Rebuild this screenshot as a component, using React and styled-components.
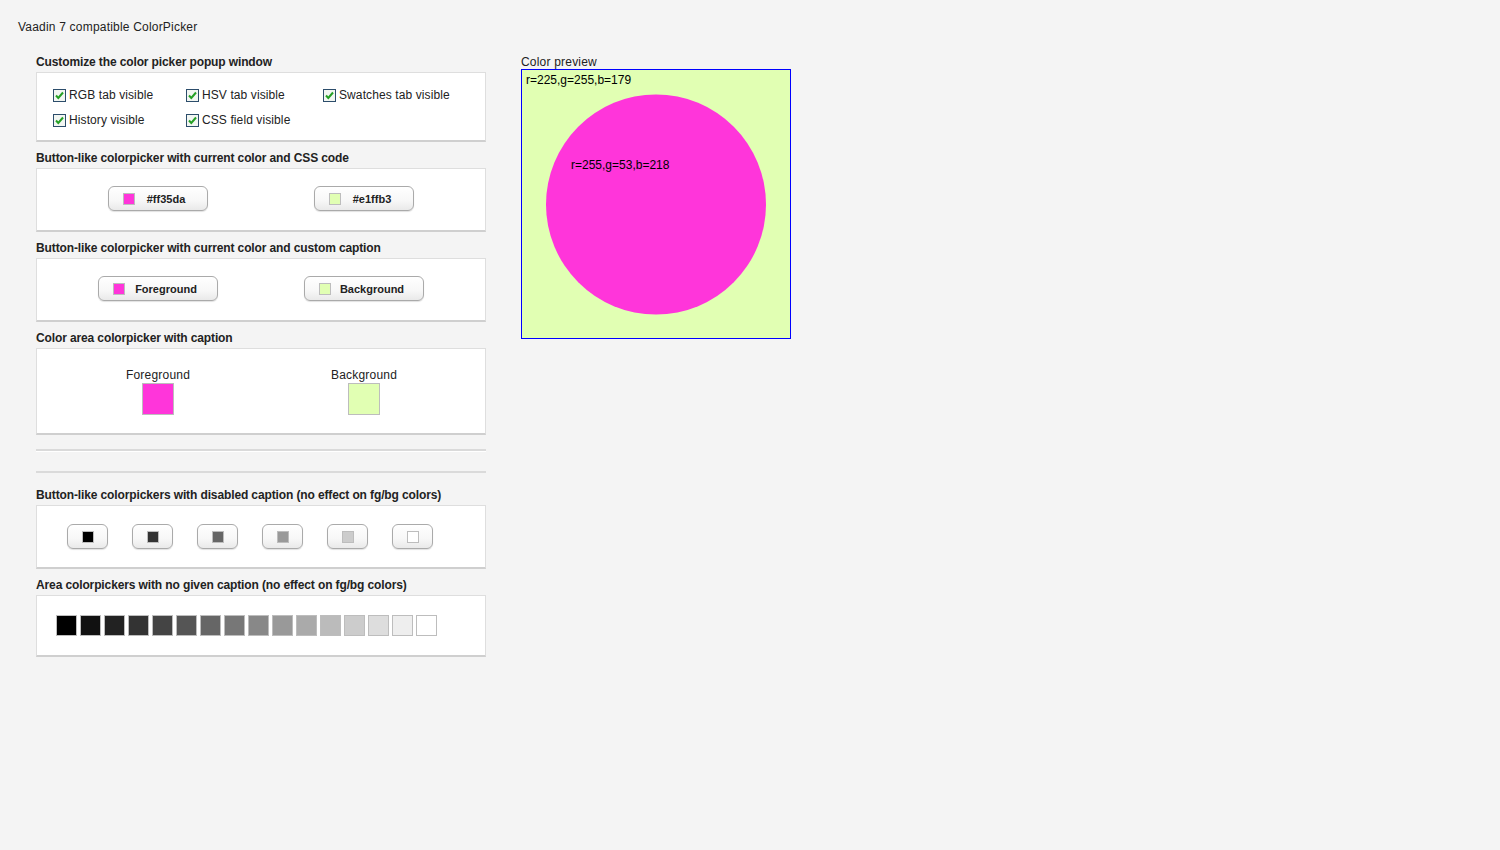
import React from 'react';
import styled, { createGlobalStyle } from 'styled-components';

const GlobalStyle = createGlobalStyle`
  html, body {
    margin: 0;
    padding: 0;
    background: #f4f4f4;
  }
  body {
    font-family: "Liberation Sans", Arial, sans-serif;
    font-size: 12px;
    color: #222;
  }
`;

const Page = styled.div`
  padding: 19px 0 0 18px;
  min-height: 850px;
  box-sizing: border-box;
`;

const Title = styled.div`
  font-size: 12px;
  line-height: 16px;
  letter-spacing: 0.2px;
`;

const Main = styled.div`
  display: flex;
  align-items: flex-start;
  gap: 35px;
  margin-top: 19px;
  padding-left: 18px;
`;

const LeftColumn = styled.div`
  width: 450px;
  display: flex;
  flex-direction: column;
`;

const Section = styled.div`
  display: flex;
  flex-direction: column;
  margin-top: ${p => p.$top || 0}px;
`;

const Caption = styled.div`
  font-weight: bold;
  font-size: 12px;
  line-height: 16px;
  letter-spacing: -0.12px;
  margin-bottom: 2px;
  white-space: nowrap;
`;

const Panel = styled.div`
  background: #fff;
  border: 1px solid #dedede;
  border-bottom: 2px solid #cfcfcf;
  height: ${p => p.$h}px;
  box-sizing: border-box;
`;

const CheckGrid = styled.div`
  display: grid;
  grid-template-columns: 133px 137px auto;
  row-gap: 9px;
  padding: 14px 0 0 16px;
`;

const CheckItem = styled.label`
  display: flex;
  align-items: center;
  gap: 3px;
  height: 16px;
  letter-spacing: 0.1px;
  white-space: nowrap;
`;

const TwoCols = styled.div`
  display: grid;
  grid-template-columns: 206px 206px;
  padding: 0 0 2px 18px;
  box-sizing: border-box;
  height: 100%;
  align-items: center;
  justify-items: center;
`;

const Button = styled.div`
  width: ${p => p.$w}px;
  height: 25px;
  box-sizing: border-box;
  border: 1px solid #aaa;
  border-radius: 6px;
  background: linear-gradient(#ffffff, #f7f7f7 60%, #e9e9e9);
  box-shadow: 0 1px 1px rgba(0, 0, 0, 0.12);
  display: flex;
  align-items: center;
  justify-content: ${p => (p.$icon ? 'center' : 'flex-start')};
  padding: ${p => (p.$icon ? '0' : '0 10px 0 14px')};
  font-weight: bold;
  font-size: 11px;
`;

const ButtonText = styled.span`
  flex: 1;
  text-align: center;
`;

const Swatch = styled.span`
  display: block;
  flex: none;
  width: ${p => p.$size}px;
  height: ${p => p.$size}px;
  box-sizing: border-box;
  border: 1px solid #bdbdbd;
  background: ${p => p.$color};
`;

const AreaPicker = styled.div`
  display: flex;
  flex-direction: column;
  align-items: center;
  gap: 0;
  padding-top: 18px;
  align-self: start;
  letter-spacing: 0.2px;
  line-height: 16px;
`;

const EmptyLine = styled.div`
  height: 0;
  border-top: 2px solid #dadada;
  border-bottom: ${p => (p.$white ? '1px solid #fff' : 'none')};
  margin-top: ${p => p.$top}px;
`;

const ButtonRow = styled.div`
  display: flex;
  align-items: center;
  gap: 24px;
  height: 100%;
  padding-left: 30px;
  box-sizing: border-box;
`;

const SwatchRow = styled.div`
  display: flex;
  gap: 3px;
  padding: 19px 0 0 19px;
`;

const RightColumn = styled.div`
  display: flex;
  flex-direction: column;
`;

const PreviewCaption = styled.div`
  line-height: 16px;
  letter-spacing: 0.2px;
  margin-bottom: -1px;
`;

const PreviewBox = styled.div`
  width: 270px;
  height: 270px;
  box-sizing: border-box;
  border: 1px solid #0000ff;
  background: #e1ffb3;
`;

const CheckBox = () => (
  <svg width="13" height="13" viewBox="0 0 13 13">
    <rect x="0.5" y="0.5" width="12" height="12" fill="#f2f6f2" stroke="#2c4d6b" />
    <path d="M3 6.5 L5.3 9 L10 3.5" fill="none" stroke="#25a025" strokeWidth="2" />
  </svg>
);

const checks = [
  'RGB tab visible',
  'HSV tab visible',
  'Swatches tab visible',
  'History visible',
  'CSS field visible'
];

const disabledColors = ['#000', '#333', '#666', '#999', '#ccc', '#fff'];
const areaColors = ['#000', '#111', '#222', '#333', '#444', '#555', '#666', '#777',
  '#888', '#999', '#aaa', '#bbb', '#ccc', '#ddd', '#eee', '#fff'];

const App = () => {
  return (
    <>
      <GlobalStyle />
      <Page>
        <Title>Vaadin 7 compatible ColorPicker</Title>
        <Main>
          <LeftColumn>
            <Section>
              <Caption>Customize the color picker popup window</Caption>
              <Panel $h={70}>
                <CheckGrid>
                  {checks.map(c => (
                    <CheckItem key={c}><CheckBox />{c}</CheckItem>
                  ))}
                </CheckGrid>
              </Panel>
            </Section>

            <Section $top={8}>
              <Caption>Button-like colorpicker with current color and CSS code</Caption>
              <Panel $h={64}>
                <TwoCols>
                  <Button $w={100}><Swatch $size={12} $color="#ff35da" /><ButtonText>#ff35da</ButtonText></Button>
                  <Button $w={100}><Swatch $size={12} $color="#e1ffb3" /><ButtonText>#e1ffb3</ButtonText></Button>
                </TwoCols>
              </Panel>
            </Section>

            <Section $top={8}>
              <Caption>Button-like colorpicker with current color and custom caption</Caption>
              <Panel $h={64}>
                <TwoCols>
                  <Button $w={120}><Swatch $size={12} $color="#ff35da" /><ButtonText>Foreground</ButtonText></Button>
                  <Button $w={120}><Swatch $size={12} $color="#e1ffb3" /><ButtonText>Background</ButtonText></Button>
                </TwoCols>
              </Panel>
            </Section>

            <Section $top={8}>
              <Caption>Color area colorpicker with caption</Caption>
              <Panel $h={87}>
                <TwoCols>
                  <AreaPicker>Foreground<Swatch $size={32} $color="#ff35da" /></AreaPicker>
                  <AreaPicker>Background<Swatch $size={32} $color="#e1ffb3" /></AreaPicker>
                </TwoCols>
              </Panel>
            </Section>

            <EmptyLine $top={14} $white />
            <EmptyLine $top={19} />

            <Section $top={14}>
              <Caption>Button-like colorpickers with disabled caption (no effect on fg/bg colors)</Caption>
              <Panel $h={64}>
                <ButtonRow>
                  {disabledColors.map(c => (
                    <Button key={c} $w={41} $icon><Swatch $size={12} $color={c} /></Button>
                  ))}
                </ButtonRow>
              </Panel>
            </Section>

            <Section $top={8}>
              <Caption>Area colorpickers with no given caption (no effect on fg/bg colors)</Caption>
              <Panel $h={62}>
                <SwatchRow>
                  {areaColors.map(c => (
                    <Swatch key={c} $size={21} $color={c} />
                  ))}
                </SwatchRow>
              </Panel>
            </Section>
          </LeftColumn>

          <RightColumn>
            <PreviewCaption>Color preview</PreviewCaption>
            <PreviewBox>
              <svg width="268" height="268" viewBox="0 0 268 268">
                <circle cx="134" cy="134.5" r="110" fill="#ff35da" />
                <text x="4" y="14" fontFamily="Liberation Sans, Arial, sans-serif" fontSize="12" fill="#000">r=225,g=255,b=179</text>
                <text x="49" y="99" fontFamily="Liberation Sans, Arial, sans-serif" fontSize="12" fill="#000">r=255,g=53,b=218</text>
              </svg>
            </PreviewBox>
          </RightColumn>
        </Main>
      </Page>
    </>
  );
};

export default App;
